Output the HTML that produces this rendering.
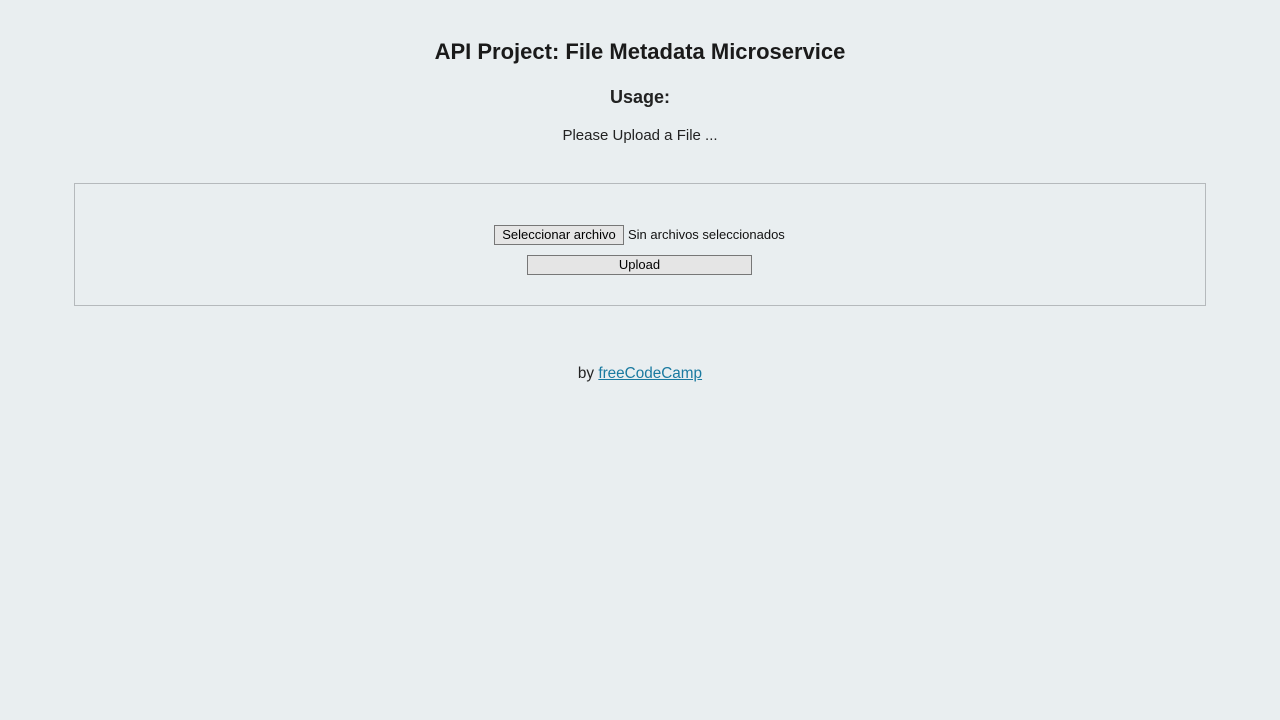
<!DOCTYPE html>
<html><head><style>
body{margin:0;background:#e9eef0;font-family:"Liberation Sans",sans-serif;color:#222;width:1280px;height:720px;position:relative}
.a{position:absolute;left:0;width:1280px;text-align:center;white-space:nowrap}
.box{position:absolute;left:74px;top:183px;width:1130px;height:121px;border:1px solid #b5b9bc}
.btn{position:absolute;background:#e5e5e5;border:1px solid #777;font-size:13px;color:#000;text-align:center;box-sizing:border-box;line-height:18px}
</style></head><body>
<div class="a" style="top:39px;font-size:22px;font-weight:bold;color:#1a1a1a">API Project: File Metadata Microservice</div>
<div class="a" style="top:87px;font-size:18px;font-weight:bold">Usage:</div>
<div class="a" style="top:127px;font-size:15px">Please Upload a File ...</div>
<div class="box"></div>
<div class="btn" style="left:494px;top:225px;width:130px;height:20px">Seleccionar archivo</div>
<div style="position:absolute;left:628px;top:227px;font-size:13px;color:#111">Sin archivos seleccionados</div>
<div class="btn" style="left:527px;top:255px;width:225px;height:20px">Upload</div>
<div class="a" style="top:365px;font-size:15.3px">by <span style="color:#1a7aa0;text-decoration:underline">freeCodeCamp</span></div>
</body></html>
